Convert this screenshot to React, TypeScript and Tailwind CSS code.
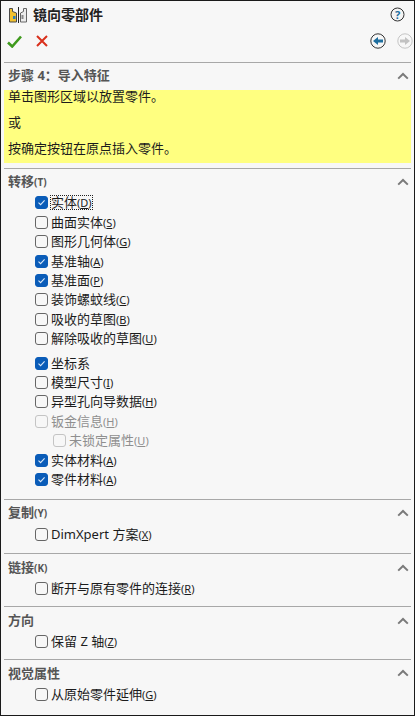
const font = { fontFamily: '"Noto Sans", "Noto Sans CJK SC", sans-serif' };

const Chevron = () => (
  <svg width="12" height="8" viewBox="0 0 12 8" className="shrink-0">
    <path d="M1.2 6.6 6 2l4.8 4.6" fill="none" stroke="#7a7a7a" strokeWidth="2" />
  </svg>
);

const Hotkey = ({ k }: { k: string }) => (
  <span className="text-[11px]">
    (<span className="underline underline-offset-1">{k}</span>)
  </span>
);

const Check = ({ checked, disabled }: { checked?: boolean; disabled?: boolean }) => (
  <span
    className={`flex h-[13px] w-[13px] shrink-0 items-center justify-center rounded-[3px] border ${
      checked
        ? "border-[#0a5cb8] bg-[#0a5cb8]"
        : disabled
          ? "border-[#c4c4c4] bg-[#f7f7f7]"
          : "border-[#666666] bg-[#f7f7f7]"
    }`}
  >
    {checked && (
      <svg width="9" height="9" viewBox="0 0 9 9">
        <path d="M1.5 4.7 3.6 6.7 7.6 2.4" fill="none" stroke="#d9e8f8" strokeWidth="1.1" />
      </svg>
    )}
  </span>
);

type RowProps = {
  label: string;
  k?: string;
  checked?: boolean;
  disabled?: boolean;
  focus?: boolean;
  indent?: boolean;
};

const Row = ({ label, k, checked, disabled, focus, indent }: RowProps) => (
  <div
    className={`flex h-[19.4px] items-center gap-[3px] text-[13px] leading-none ${
      indent ? "pl-[52px]" : "pl-[34px]"
    } ${disabled ? "text-[#8f8f8f]" : "text-[#1c1c1c]"}`}
  >
    <Check checked={checked} disabled={disabled} />
    <span className={focus ? "outline-1 outline-dotted outline-[#222222]" : ""}>
      {label}
      {k && <Hotkey k={k} />}
    </span>
  </div>
);

const Section = ({ title, k }: { title: string; k?: string }) => (
  <div className="flex h-[20px] items-center justify-between pl-[7px] pr-[5px] text-[13px] font-bold text-[#555555]">
    <span>
      {title}
      {k && <span className="text-[10px]">({k})</span>}
    </span>
    <Chevron />
  </div>
);

const Line = () => <div className="mx-[3px] h-[1px] bg-[#a8a8a8]" />;

export default function App() {
  return (
    <div
      className="flex h-[716px] w-[415px] flex-col overflow-hidden border border-[#1a1a1a] bg-[#f7f7f7]"
      style={font}
    >
      <div className="flex h-[27px] items-center justify-between pl-[8px] pr-[9px]">
        <div className="flex items-center gap-[6px]">
          <svg width="18" height="16" viewBox="0 0 18 16">
            <path d="M.5 1.5h3v3l4 1.5v9h-7z" fill="#f2c230" stroke="#4a4a4a" />
            <rect x="4" y="9" width="2.5" height="3" fill="#2f7fb5" />
            <path d="M9.5 0v16" stroke="#222222" />
            <path d="M17.5 1.5h-3v3l-3 1.5v9h6z" fill="#ececec" stroke="#666666" />
            <rect x="12.5" y="8" width="2" height="4" fill="#8a8a8a" />
          </svg>
          <span className="text-[14px] font-bold text-[#222222]">镜向零部件</span>
        </div>
        <svg width="15" height="15" viewBox="0 0 15 15">
          <circle cx="7.5" cy="7.5" r="6.5" fill="#f4f4f4" stroke="#333333" />
          <text x="7.5" y="11.5" textAnchor="middle" fontSize="11" fontWeight="700" fill="#1f6f9f" style={font}>
            ?
          </text>
        </svg>
      </div>

      <div className="flex h-[26px] items-center justify-between pl-[6px] pr-[1px]">
        <div className="flex items-center gap-[14px]">
          <svg width="15" height="13" viewBox="0 0 15 13">
            <path d="M1 7.5 5.2 11.5 14 1.5" fill="none" stroke="#3f9a1d" strokeWidth="2.6" />
          </svg>
          <svg width="12" height="12" viewBox="0 0 12 12">
            <path d="M1 1 11 11M11 1 1 11" fill="none" stroke="#d9301c" strokeWidth="2" />
          </svg>
        </div>
        <div className="flex items-center gap-[11px]">
          <svg width="16" height="16" viewBox="0 0 16 16">
            <circle cx="8" cy="8" r="7.2" fill="#f7f7f7" stroke="#333333" />
            <path d="M3 8 8 4v2.4h5v3.2H8V12z" fill="#1f6f9f" />
          </svg>
          <svg width="16" height="16" viewBox="0 0 16 16">
            <circle cx="8" cy="8" r="7.2" fill="#f7f7f7" stroke="#c4c4c4" />
            <path d="M13 8 8 4v2.4H3v3.2h5V12z" fill="#c2c2c2" />
          </svg>
        </div>
      </div>

      <div className="mt-[8px]">
        <Line />
      </div>
      <div className="mt-[3px]">
        <Section title="步骤 4：导入特征" />
      </div>
      <div className="mx-[3px] mt-[4px] flex h-[73px] flex-col justify-between bg-[#ffff80] pb-[7px] pl-[4px] text-[13px] leading-[15px] text-[#1c1c1c]">
        <div className="-mt-[1px]">单击图形区域以放置零件。</div>
        <div>或</div>
        <div>按确定按钮在原点插入零件。</div>
      </div>

      <div className="mt-[5px]">
        <Line />
      </div>
      <div className="mt-[3px]">
        <Section title="转移" k="T" />
      </div>
      <div className="mt-[1.3px]">
        <Row label="实体" k="D" checked focus />
        <Row label="曲面实体" k="S" />
        <Row label="图形几何体" k="G" />
        <Row label="基准轴" k="A" checked />
        <Row label="基准面" k="P" checked />
        <Row label="装饰螺蚊线" k="C" />
        <Row label="吸收的草图" k="B" />
        <Row label="解除吸收的草图" k="U" />
        <div className="h-[5px]" />
        <Row label="坐标系" checked />
        <Row label="模型尺寸" k="I" />
        <Row label="异型孔向导数据" k="H" />
        <Row label="钣金信息" k="H" disabled />
        <Row label="未锁定属性" k="U" disabled indent />
        <Row label="实体材料" k="A" checked />
        <Row label="零件材料" k="A" checked />
      </div>

      <div className="mt-[10px]">
        <Line />
      </div>
      <div className="mt-[3px]">
        <Section title="复制" k="Y" />
      </div>
      <div className="mt-[2px]">
        <Row label="DimXpert 方案" k="X" />
      </div>

      <div className="mt-[8px]">
        <Line />
      </div>
      <div className="mt-[4px]">
        <Section title="链接" k="K" />
      </div>
      <div className="mt-[1px]">
        <Row label="断开与原有零件的连接" k="R" />
      </div>

      <div className="mt-[8px]">
        <Line />
      </div>
      <div className="mt-[4px]">
        <Section title="方向" />
      </div>
      <div className="mt-[1px]">
        <Row label="保留 Z 轴" k="Z" />
      </div>

      <div className="mt-[8px]">
        <Line />
      </div>
      <div className="mt-[3px]">
        <Section title="视觉属性" />
      </div>
      <div className="mt-[1px]">
        <Row label="从原始零件延伸" k="G" />
      </div>
    </div>
  );
}
